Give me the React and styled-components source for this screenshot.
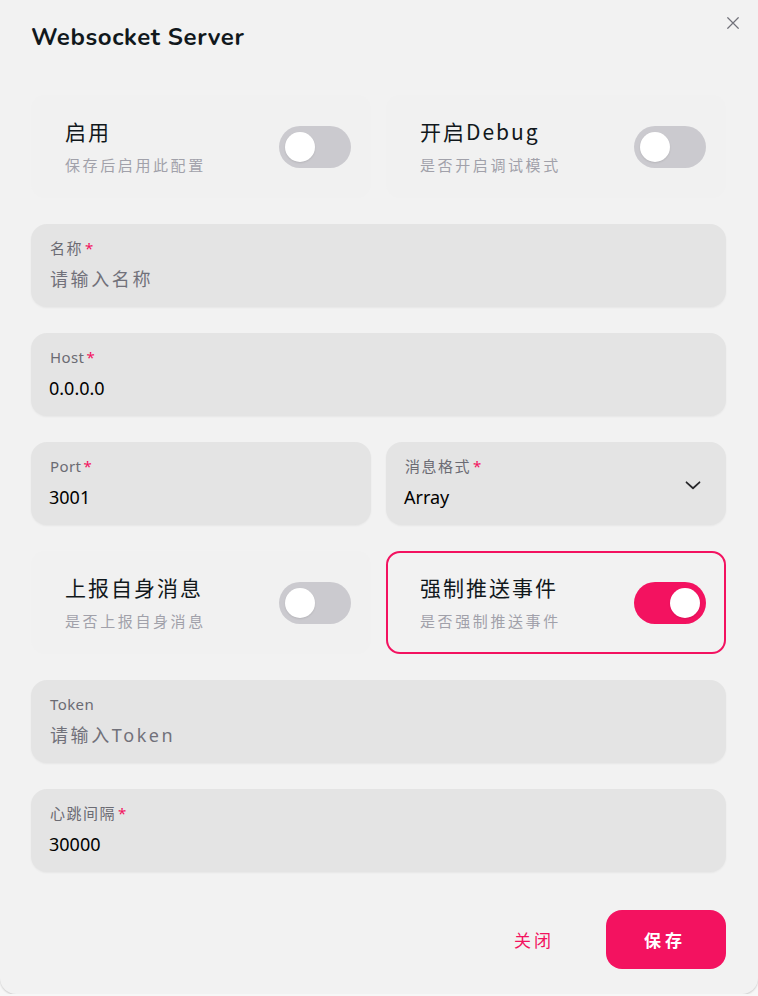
import React, { useState } from 'react';
import styled, { createGlobalStyle } from 'styled-components';

const PINK = '#f31260';

const GlobalStyle = createGlobalStyle`
  body {
    margin: 0;
    background: #f7f7f7;
    font-family: "Noto Sans", "Noto Sans CJK SC", sans-serif;
  }
`;

const Modal = styled.div`
  box-sizing: border-box;
  width: 758px;
  height: 994px;
  background: #f2f2f2;
  border-radius: 0 0 16px 16px;
  box-shadow: 0 1px 2px rgba(0, 0, 0, 0.18);
  padding: 22px 32px 0 31px;
  position: relative;
`;

const Title = styled.h2`
  margin: 0;
  font-family: "Nunito", "Noto Sans", "Noto Sans CJK SC", sans-serif;
  font-size: 24px;
  font-weight: 700;
  line-height: 30px;
  letter-spacing: 0.6px;
  color: #11181c;
`;

const CloseButton = styled.button`
  position: absolute;
  top: 12px;
  right: 14px;
  width: 22px;
  height: 22px;
  padding: 0;
  border: none;
  background: none;
  color: #71717a;
  display: flex;
  align-items: center;
  justify-content: center;
  cursor: pointer;
`;

const Body = styled.div`
  margin-top: 43px;
  display: flex;
  flex-direction: column;
  gap: 26px;
`;

const Row = styled.div`
  display: grid;
  grid-template-columns: 1fr 1fr;
  gap: 15px;
`;

const SwitchCard = styled.div`
  box-sizing: border-box;
  height: 103px;
  border-radius: 14px;
  border: 2px solid ${(p) => (p.$active ? PINK : 'transparent')};
  background: ${(p) => (p.$active ? 'transparent' : '#f1f1f1')};
  display: flex;
  align-items: center;
  justify-content: space-between;
  padding: 0 18px 0 32px;
`;

const CardText = styled.div`
  display: flex;
  flex-direction: column;
  gap: 11px;
  font-family: "Noto Sans CJK SC", sans-serif;
`;

const CardTitle = styled.div`
  font-size: 21px;
  letter-spacing: 2px;
  color: #11181c;
  line-height: 26px;
`;

const CardDesc = styled.div`
  font-size: 15px;
  letter-spacing: 2.6px;
  color: #a1a1aa;
  line-height: 20px;
`;

const Track = styled.button`
  position: relative;
  width: 72px;
  height: 42px;
  border: none;
  padding: 0;
  border-radius: 21px;
  background: ${(p) => (p.$on ? PINK : '#cbcacf')};
  cursor: pointer;
  flex-shrink: 0;
`;

const Knob = styled.span`
  position: absolute;
  top: 6px;
  left: ${(p) => (p.$on ? '36px' : '6px')};
  width: 30px;
  height: 30px;
  border-radius: 50%;
  background: #fff;
  box-shadow: 0 1px 2px rgba(0, 0, 0, 0.1);
`;

const Field = styled.div`
  box-sizing: border-box;
  height: 83px;
  border-radius: 16px;
  background: #e4e4e4;
  box-shadow: 0 1px 2px rgba(0, 0, 0, 0.05);
  padding: 14px 18px 0 18px;
  display: flex;
  align-items: flex-start;
  justify-content: space-between;
`;

const FieldInner = styled.div`
  display: flex;
  flex-direction: column;
  gap: 8px;
`;

const Label = styled.label`
  font-family: "Noto Sans", "Noto Sans CJK SC", sans-serif;
  font-size: 15px;
  letter-spacing: ${(p) => (p.$cjk ? '1.5px' : '0.4px')};
  line-height: 20px;
  color: #6b6b73;
  padding-left: 1px;
`;

const Star = styled.span`
  color: ${PINK};
  margin-left: 2px;
  letter-spacing: 0;
`;

const Value = styled.div`
  font-family: "Noto Sans", "Noto Sans CJK SC", sans-serif;
  font-size: 18px;
  line-height: 26px;
  color: ${(p) => (p.$placeholder ? '#71717a' : '#000')};
  letter-spacing: ${(p) => (p.$placeholder ? '2.6px' : '0')};
  padding-left: ${(p) => (p.$placeholder ? '1px' : '0')};
`;

const Chevron = styled.span`
  margin-top: 16px;
  margin-right: 2px;
  display: flex;
`;

const Footer = styled.div`
  margin-top: 38px;
  display: flex;
  justify-content: flex-end;
  gap: 13px;
`;

const Button = styled.button`
  width: 120px;
  height: 59px;
  border: none;
  border-radius: 16px;
  background: ${(p) => (p.$primary ? PINK : 'transparent')};
  color: ${(p) => (p.$primary ? '#fff' : PINK)};
  font-family: "Noto Sans CJK SC", sans-serif;
  font-size: 17px;
  font-weight: ${(p) => (p.$primary ? 700 : 400)};
  letter-spacing: ${(p) => (p.$primary ? '4px' : '3px')};
  padding-left: ${(p) => (p.$primary ? '4px' : '8px')};
  cursor: pointer;
`;

const Toggle = ({ on, onChange }) => (
  <Track $on={on} onClick={() => onChange(!on)}>
    <Knob $on={on} />
  </Track>
);

const SwitchItem = ({ title, desc, on, onChange, active }) => (
  <SwitchCard $active={active}>
    <CardText>
      <CardTitle>{title}</CardTitle>
      <CardDesc>{desc}</CardDesc>
    </CardText>
    <Toggle on={on} onChange={onChange} />
  </SwitchCard>
);

const InputField = ({ label, required, value, placeholder, cjk, select }) => (
  <Field>
    <FieldInner>
      <Label $cjk={cjk}>
        {label}
        {required && <Star>*</Star>}
      </Label>
      {value ? <Value>{value}</Value> : <Value $placeholder>{placeholder}</Value>}
    </FieldInner>
    {select && (
      <Chevron>
        <svg width="26" height="26" viewBox="0 0 24 24" fill="none" stroke="#27272a" strokeWidth="1.6" strokeLinecap="round" strokeLinejoin="round">
          <path d="M6 9.5l6 5.5 6-5.5" />
        </svg>
      </Chevron>
    )}
  </Field>
);

const App = () => {
  const [enable, setEnable] = useState(false);
  const [debug, setDebug] = useState(false);
  const [reportSelf, setReportSelf] = useState(false);
  const [forcePush, setForcePush] = useState(true);

  return (
    <>
      <GlobalStyle />
      <Modal>
        <Title>Websocket Server</Title>
        <CloseButton aria-label="close">
          <svg width="18" height="18" viewBox="0 0 24 24" fill="none" stroke="currentColor" strokeWidth="1.6" strokeLinecap="round">
            <path d="M5 5l14 14M19 5L5 19" />
          </svg>
        </CloseButton>
        <Body>
          <Row>
            <SwitchItem title="启用" desc="保存后启用此配置" on={enable} onChange={setEnable} />
            <SwitchItem title="开启Debug" desc="是否开启调试模式" on={debug} onChange={setDebug} />
          </Row>
          <InputField label="名称" required cjk placeholder="请输入名称" />
          <InputField label="Host" required value="0.0.0.0" />
          <Row>
            <InputField label="Port" required value="3001" />
            <InputField label="消息格式" required cjk value="Array" select />
          </Row>
          <Row>
            <SwitchItem title="上报自身消息" desc="是否上报自身消息" on={reportSelf} onChange={setReportSelf} />
            <SwitchItem title="强制推送事件" desc="是否强制推送事件" on={forcePush} onChange={setForcePush} active={forcePush} />
          </Row>
          <InputField label="Token" placeholder="请输入Token" />
          <InputField label="心跳间隔" required cjk value="30000" />
        </Body>
        <Footer>
          <Button>关闭</Button>
          <Button $primary>保存</Button>
        </Footer>
      </Modal>
    </>
  );
};

export default App;
